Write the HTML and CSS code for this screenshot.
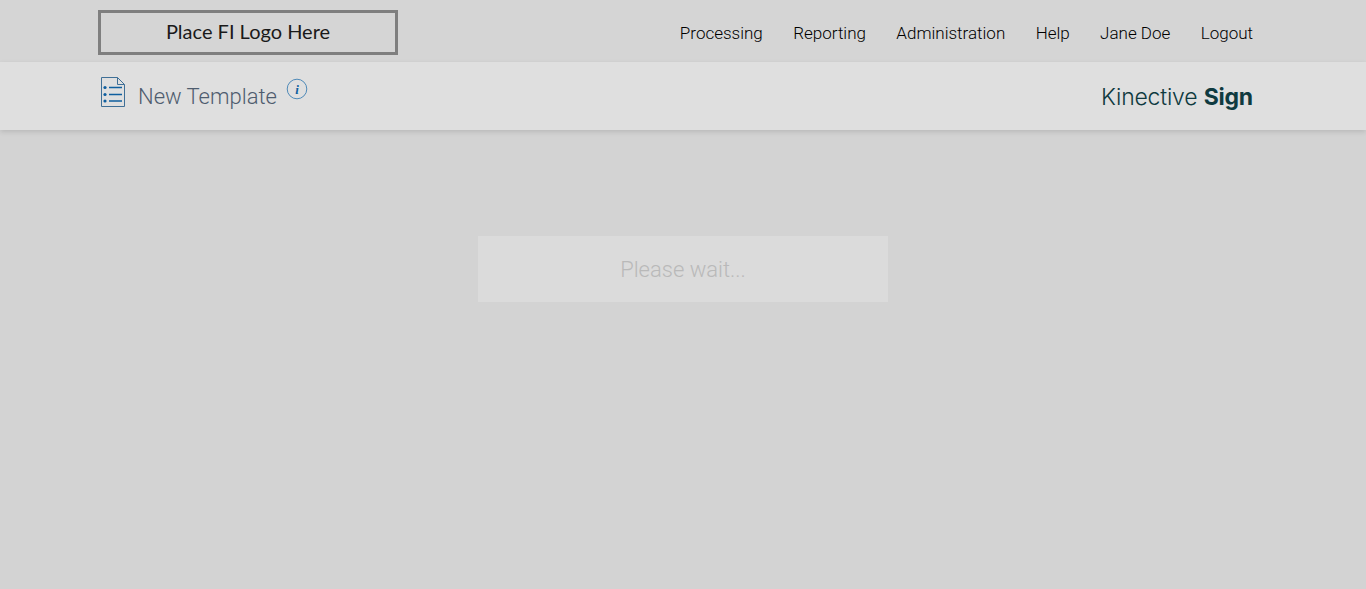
FILE: index.html
```html
<!DOCTYPE html>
<html lang="en">
<head>
<meta charset="utf-8">
<title>New Template</title>
<link rel="stylesheet" href="styles.css">
</head>
<body>
<header class="topbar">
  <div class="logo-box">Place FI Logo Here</div>
  <nav class="nav">
    <a>Processing</a>
    <a>Reporting</a>
    <a>Administration</a>
    <a>Help</a>
    <a>Jane Doe</a>
    <a>Logout</a>
  </nav>
</header>
<section class="subbar">
  <div class="title-group">
    <svg class="doc-icon" width="26" height="32" viewBox="0 0 26 32" fill="none">
      <path d="M1.5 1.5H17.5L24.5 8.5V30.5H1.5Z" stroke="#3f6f96" stroke-width="1"/>
      <path d="M17.5 1.5V8.5H24.5" stroke="#3f6f96" stroke-width="1"/>
      <circle cx="5" cy="11.5" r="1.6" fill="#0f5f9f"/>
      <circle cx="5" cy="18.5" r="1.6" fill="#0f5f9f"/>
      <circle cx="5" cy="25" r="1.6" fill="#0f5f9f"/>
      <path d="M9 11.5H22M9 18.5H22M9 25H22" stroke="#0f5f9f" stroke-width="1.4"/>
    </svg>
    <h1 class="title">New Template</h1>
    <svg class="info-icon" width="22" height="22" viewBox="0 0 22 22">
      <circle cx="11" cy="11" r="9.8" fill="none" stroke="#4f8ab8" stroke-width="1"/>
      <text x="11" y="15.5" text-anchor="middle" class="info-i">i</text>
    </svg>
  </div>
  <div class="brand">Kinective <b>Sign</b></div>
</section>
<main class="content">
  <div class="wait">Please wait...</div>
</main>
</body>
</html>
```
FILE: styles.css
```css
html, body {
  margin: 0;
  height: 100%;
}
body {
  display: flex;
  flex-direction: column;
  height: 589px;
  overflow: hidden;
  background: #d3d3d3;
  font-family: Roboto, "Liberation Sans", sans-serif;
}
.topbar {
  height: 62px;
  box-sizing: border-box;
  padding: 10px 113px 0 98px;
  display: flex;
  justify-content: space-between;
  align-items: flex-start;
  background: #d5d5d5;
}
.logo-box {
  width: 300px;
  height: 45px;
  box-sizing: border-box;
  border: 3px solid #7f7f7f;
  padding-bottom: 3px;
  display: flex;
  align-items: center;
  justify-content: center;
  font: 400 20px Lato, "Open Sans", sans-serif;
  color: #1a1a1a;
}
.nav {
  display: flex;
  gap: 30.4px;
  padding-top: 13px;
  font-size: 17px;
  font-weight: 300;
  line-height: 20px;
  color: #000;
}
.subbar {
  height: 68px;
  box-sizing: border-box;
  padding: 0 113px 0 100px;
  display: flex;
  justify-content: space-between;
  background: #dfdfdf;
  box-shadow: 0 2px 5px rgba(0, 0, 0, 0.12);
  position: relative;
}
.title-group {
  display: flex;
  align-items: flex-start;
}
.doc-icon {
  margin-top: 14px;
}
.title {
  margin: 21px 0 0 12px;
  font-size: 22px;
  font-weight: 300;
  line-height: 28px;
  color: #4e5c6e;
}
.info-icon {
  margin: 16px 0 0 9px;
}
.info-i {
  font: italic 700 13px "Liberation Serif", serif;
  fill: #0f5f9f;
}
.brand {
  margin-top: 20px;
  font: 300 23px/30px Inter, sans-serif;
  letter-spacing: -0.2px;
  color: #0f3a40;
}
.brand b {
  font-weight: 700;
}
.content {
  flex: 1;
  display: flex;
  justify-content: center;
  align-items: flex-start;
  padding-top: 106px;
}
.wait {
  width: 410px;
  height: 66px;
  background: #dbdbdb;
  display: flex;
  align-items: center;
  justify-content: center;
  font-size: 22px;
  font-weight: 300;
  color: #b9b9b9;
}
```
